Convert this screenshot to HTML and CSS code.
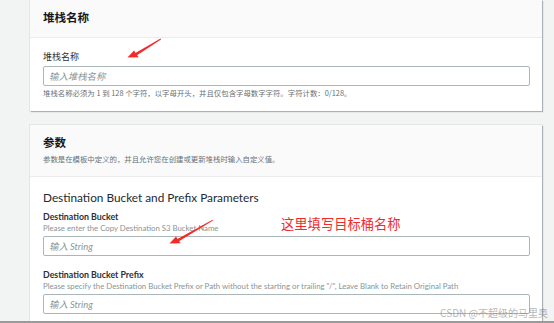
FILE: index.html
```html
<!DOCTYPE html>
<html lang="zh-CN">
<head>
    <meta charset="UTF-8">
    <meta name="viewport" content="width=device-width, initial-scale=1.0">
    <title>创建堆栈</title>
    <link rel="stylesheet" href="styles.css">
</head>
<body>

<div class="page">
    <!-- Stack name -->
    <div class="card">
        <div class="card-header">
            <h2>堆栈名称</h2>
        </div>
        <div class="card-body">
            <label class="field-label">堆栈名称</label>
            <input class="field-input" type="text" placeholder="输入堆栈名称">
            <p class="field-help">堆栈名称必须为 1 到 128 个字符，以字母开头，并且仅包含字母数字字符。字符计数：0/128。</p>
        </div>
    </div>

    <!-- Parameters -->
    <div class="card">
        <div class="card-header">
            <h2>参数</h2>
            <p class="header-desc">参数是在模板中定义的，并且允许您在创建或更新堆栈时输入自定义值。</p>
        </div>
        <div class="card-body">
            <h3>Destination Bucket and Prefix Parameters</h3>

            <div class="field">
                <label class="field-label">Destination Bucket</label>
                <p class="field-desc">Please enter the Copy Destination S3 Bucket Name</p>
                <input class="field-input" type="text" placeholder="输入 String">
            </div>

            <div class="field">
                <label class="field-label">Destination Bucket Prefix</label>
                <p class="field-desc">Please specify the Destination Bucket Prefix or Path without the starting or trailing "/", Leave Blank to Retain Original Path</p>
                <input class="field-input" type="text" placeholder="输入 String">
            </div>
        </div>
    </div>
</div>

<!-- Annotations -->
<svg class="arrows" width="554" height="323" viewBox="0 0 554 323">
    <g fill="#f42a2a" stroke="none">
        <path d="M160.5 38.6 L135 53.3 L136.6 55.4 L161 39.4 Z"/>
        <path d="M127.5 57.6 L134 50.6 L138.6 57.2 Z"/>
        <path d="M212.5 219.8 L177 239.3 L178.6 241.4 L213 220.6 Z"/>
        <path d="M169.5 243.6 L176 236.6 L180.6 243.2 Z"/>
    </g>
</svg>
<div class="note">这里填写目标桶名称</div>
<div class="watermark">CSDN @不超级的马里奥</div>

</body>
</html>
```

FILE: styles.css
```css
body {
    margin: 0;
    padding: 0;
    background-color: #f2f3f3;
    font-family: Lato, "Noto Sans CJK SC", sans-serif;
    color: #16191f;
    width: 554px;
    height: 323px;
    overflow: hidden;
    position: relative;
}

.page {
    padding: 0 12px 0 30px;
    display: flex;
    flex-direction: column;
    gap: 14px;
}

/* Cards */
.card {
    background-color: #fff;
    box-shadow: 1px 1px 1px rgba(0, 22, 44, 0.25), 0 0 0 1px rgba(0, 22, 44, 0.06);
}

.card-header {
    background-color: #fafafa;
    border-bottom: 1px solid #eaeded;
    padding: 10px 13px 12px;
}

.card-header h2 {
    margin: 0;
    font-family: "Noto Sans CJK SC", sans-serif;
    font-size: 11.5px;
    line-height: 15px;
    font-weight: 700;
}

.header-desc {
    margin: 4px 0 0;
    font-family: "Noto Sans CJK SC", sans-serif;
    font-size: 7.4px;
    line-height: 10px;
    color: #687078;
}

.card-body {
    padding: 13px 12px 13px 13px;
    display: flex;
    flex-direction: column;
}

.card-body h3 {
    margin: 0 0 5px;
    font-size: 11.8px;
    line-height: 16px;
    font-weight: 400;
    color: #232a31;
}

.field {
    display: flex;
    flex-direction: column;
    margin-bottom: 13px;
}

.field:last-child {
    margin-bottom: 0;
}

.field-label {
    font-size: 8.8px;
    line-height: 11px;
    font-weight: 700;
    color: #2b3138;
}

.card:first-child .field-label {
    font-family: "Noto Sans CJK SC", sans-serif;
    font-weight: 400;
    font-size: 9px;
    line-height: 12px;
    margin-bottom: 3px;
}

.field-desc {
    margin: 1px 0 3px;
    font-size: 7.8px;
    line-height: 10px;
    color: #879596;
}

.field-input {
    box-sizing: border-box;
    height: 20px;
    width: 100%;
    margin: 0;
    border: 1px solid #aab7b8;
    border-radius: 2px;
    padding: 0 5px;
    font-family: Lato, "Noto Sans CJK SC", sans-serif;
    font-size: 9.4px;
    font-style: italic;
    background: #fff;
}

.field-input::placeholder {
    color: #879596;
}

.field-help {
    margin: 2px 0 0;
    font-family: "Noto Sans CJK SC", sans-serif;
    font-size: 7.4px;
    line-height: 10px;
    color: #687078;
}

/* Annotations */
.arrows {
    position: absolute;
    top: 0;
    left: 0;
}

.note {
    position: absolute;
    left: 281px;
    top: 215px;
    font-family: "Noto Sans CJK SC", sans-serif;
    font-size: 13.3px;
    line-height: 18px;
    color: #f42a2a;
}

.watermark {
    position: absolute;
    right: 6px;
    bottom: 4px;
    font-family: "Noto Sans CJK SC", sans-serif;
    font-size: 10px;
    line-height: 13px;
    color: rgba(120, 120, 120, 0.55);
}

body::after {
    content: "";
    position: absolute;
    left: 0;
    right: 0;
    bottom: 0;
    height: 2px;
    background-color: #9a9a9a;
}
```
